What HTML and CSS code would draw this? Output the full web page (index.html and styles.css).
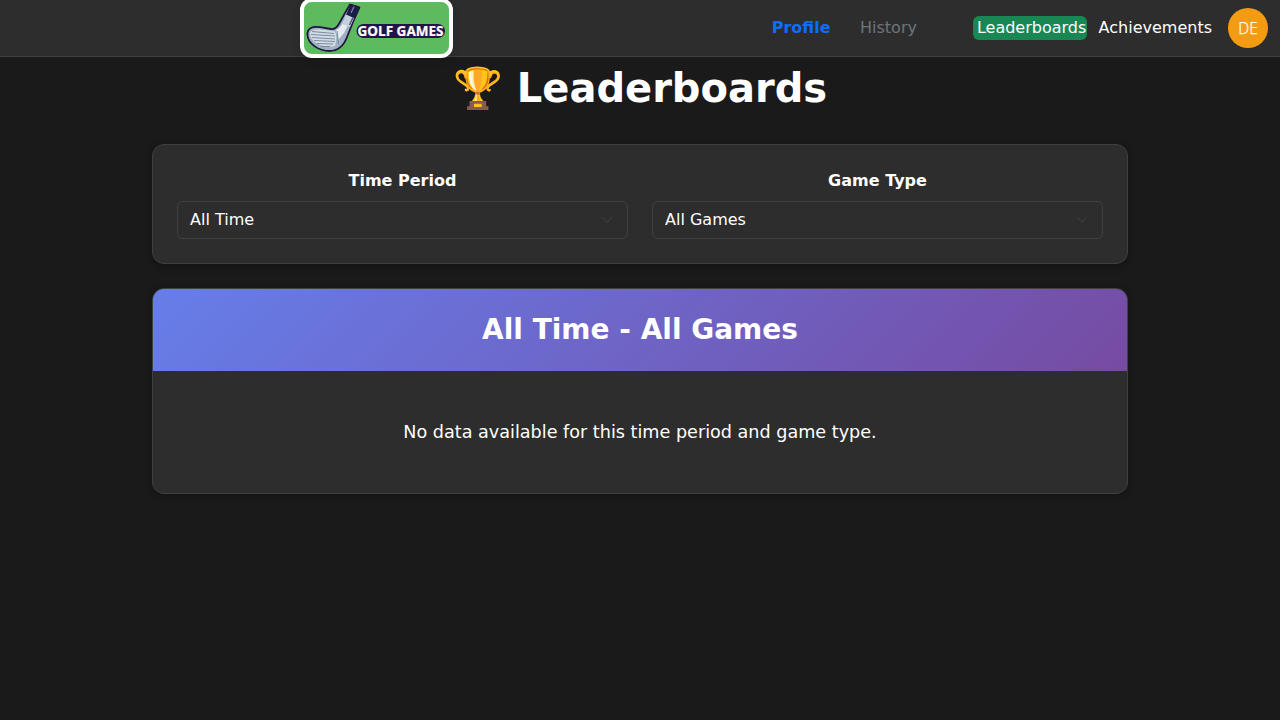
FILE: index.html
```html
<!DOCTYPE html>
<html lang="en">
<head>
<meta charset="utf-8">
<title>Leaderboards - Golf Games</title>
<link rel="stylesheet" href="styles.css">
</head>
<body>
<header class="navbar">
  <a class="logo">
    <svg class="logo-art" width="146" height="52" viewBox="0 0 146 52" aria-label="Golf Games">
      <path d="M35.5 21 L41 11 L46 2.5 L55.5 5.5 L49 20 L43 35 C40 43 34 49 25.5 49 C15 49 4 42 3.5 33 C3 26 9 24 16 25.2 L27 27 C31 27.5 33.5 25 35.5 21 Z" fill="#9fb1c3" stroke="#211640" stroke-width="1.8" stroke-linejoin="round"/>
      <path d="M6 31 C8 25.5 21 28 31 29.5 C33 34 32.5 39 31 44 C21 47 6 41 6 31 Z" fill="#d3dce4"/>
      <path d="M32 28 C36 26.5 38 23 43 13 L48 14.5 L40 31 L34 38 Z" fill="#e4ebf1"/>
      <path d="M33 29 L34.5 42" stroke="#7388a0" stroke-width="1" fill="none"/>
      <path d="M8 29.5 L30 31.5 M7 32.5 L31 34 M8 35.5 L31 37 M10 38.5 L31 39.5 M13 41.5 L29 42 M17 44.5 L26 44.5" stroke="#718197" stroke-width=".9" fill="none"/>
      <path d="M42.5 13 L47 2.5 L55.5 5 L50 17 Z" fill="#1a1c49" stroke="#211640" stroke-linejoin="round"/>
      <path d="M50 4.5 L47 11" stroke="#6e82ab" stroke-width="1.3"/>
      <path d="M42 12.5 L50 16 L46 25 L38.5 22 Z" fill="#c4d0de"/>
      <path d="M45.5 23 L49 15.5" stroke="#46536f" stroke-width="1.4"/>
      <rect x="52.5" y="22" width="88.5" height="14" rx="7" fill="#231447"/>
      <text class="logo-text" x="53.5" y="34" textLength="86" lengthAdjust="spacingAndGlyphs">GOLF GAMES</text>
    </svg>
  </a>
  <nav class="nav-links">
    <a class="nav-link nav-profile">Profile</a>
    <a class="nav-link nav-history">History</a>
    <a class="nav-link nav-leaderboards">Leaderboards</a>
    <a class="nav-link nav-achievements">Achievements</a>
    <span class="avatar">DE</span>
  </nav>
</header>
<main class="container">
  <h1 class="page-title">🏆 Leaderboards</h1>
  <section class="card filters">
    <div class="filter">
      <label class="filter-label" for="period">Time Period</label>
      <div class="select-wrap">
        <select class="select" id="period"><option>All Time</option></select>
        <svg class="chevron" viewBox="0 0 16 16"><path d="m2 5 6 6 6-6"/></svg>
      </div>
    </div>
    <div class="filter">
      <label class="filter-label" for="game">Game Type</label>
      <div class="select-wrap">
        <select class="select" id="game"><option>All Games</option></select>
        <svg class="chevron" viewBox="0 0 16 16"><path d="m2 5 6 6 6-6"/></svg>
      </div>
    </div>
  </section>
  <section class="card board">
    <h2 class="board-title">All Time - All Games</h2>
    <p class="board-empty">No data available for this time period and game type.</p>
  </section>
</main>
</body>
</html>
```
FILE: styles.css
```css
* { box-sizing: border-box; }
body {
  margin: 0;
  min-height: 100vh;
  background: #1a1a1a;
  color: #fff;
  font: 16px/1.5 "DejaVu Sans", sans-serif;
}
.navbar {
  display: flex;
  align-items: center;
  justify-content: space-between;
  height: 57px;
  padding: 0 12px 0 300px;
  background: #2d2d2d;
  border-bottom: 1px solid #404040;
}
.logo {
  flex: none;
  width: 153.4px;
  height: 60px;
  border: 4px solid #fff;
  border-radius: 12px;
  background: #5dba5f;
  overflow: hidden;
  box-shadow: 0 2px 8px rgba(0, 0, 0, .15);
}
.logo-art { display: block; }
.logo-text {
  font: 700 13.5px "Open Sans", sans-serif;
  fill: #fff;
  stroke: #fff;
  stroke-width: .2px;
}
.nav-links { display: flex; align-items: center; }
.nav-link { line-height: 24px; white-space: nowrap; }
.nav-profile { margin-right: 29.5px; color: #0d6efd; font-weight: 700; }
.nav-history { margin-right: 56px; color: #6c757d; }
.nav-leaderboards {
  width: 114px;
  margin-right: 11.7px;
  padding-left: 4px;
  border-radius: 6px;
  background: #198754;
}
.nav-achievements { margin-right: 16px; }
.avatar {
  display: flex;
  align-items: center;
  justify-content: center;
  width: 40px;
  height: 40px;
  padding-bottom: 1px;
  border-radius: 50%;
  background: #f39c12;
  font: 350 15.5px/24px "Open Sans", sans-serif;
  -webkit-text-stroke: .25px #fff;
}
.container { width: 976px; margin: 0 auto; padding-top: 7px; }
.page-title {
  margin: 0 0 32px;
  font-size: 40px;
  line-height: 48px;
  text-align: center;
}
.card {
  margin-bottom: 24px;
  border: 1px solid #404040;
  border-radius: 12px;
  background: #2d2d2d;
  box-shadow: 0 2px 8px rgba(0, 0, 0, .3);
}
.filters { display: flex; gap: 24px; padding: 24px; }
.filter { flex: 1; }
.filter-label {
  display: block;
  margin-bottom: 8px;
  font-weight: 700;
  text-align: center;
}
.select-wrap { display: grid; align-items: center; }
.select, .chevron { grid-area: 1 / 1; }
.select {
  width: 100%;
  height: 38px;
  padding: 6px 36px 6px 12px;
  border: 1px solid #404040;
  border-radius: 6px;
  background: #2d2d2d;
  color: #fff;
  font: inherit;
  appearance: none;
}
.chevron {
  justify-self: end;
  width: 16px;
  height: 12px;
  margin-right: 13px;
  fill: none;
  stroke: #343a40;
  stroke-width: 2;
  stroke-linecap: round;
  stroke-linejoin: round;
  pointer-events: none;
}
.board { overflow: hidden; }
.board-title {
  margin: 0;
  padding: 24px;
  background: linear-gradient(135deg, #667eea 0%, #764ba2 100%);
  font-size: 28px;
  line-height: 1.2;
  text-align: center;
}
.board-empty {
  margin: 0;
  padding: 48px;
  font-size: 17.6px;
  text-align: center;
}
```
